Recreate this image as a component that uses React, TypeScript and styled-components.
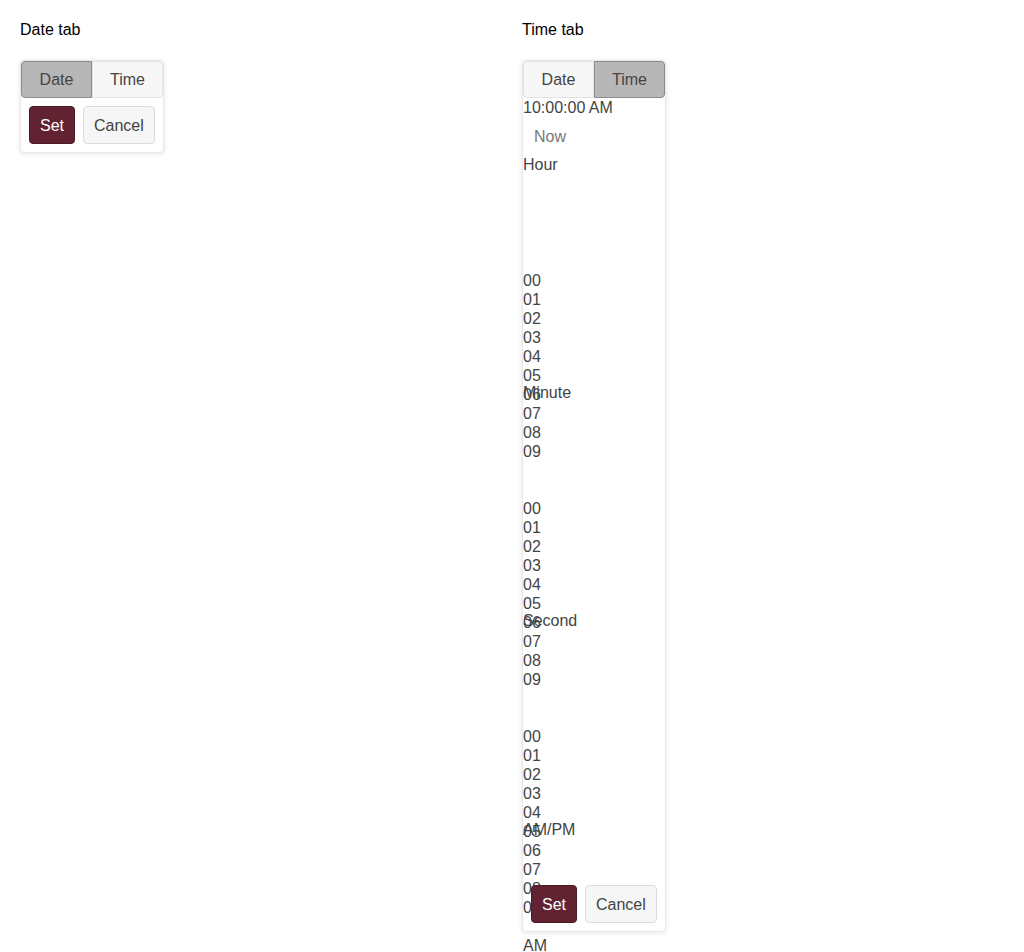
import React from 'react'
import styled, { createGlobalStyle } from 'styled-components'

const GlobalStyle = createGlobalStyle`
  body {
    margin: 0;
    background: #fff;
    font-family: "Liberation Sans", Arial, sans-serif;
    font-size: 16px;
    color: #444;
  }
`

const Page = styled.div`
  display: grid;
  grid-template-columns: 1fr 1fr;
  column-gap: 20px;
  padding: 20px;
  align-items: start;
`

const Column = styled.div`
  display: flex;
  flex-direction: column;
  align-items: flex-start;
`

const Caption = styled.div`
  color: #000;
  line-height: 20px;
  height: 20px;
  margin-bottom: 20px;
`

const Card = styled.div`
  display: flex;
  flex-direction: column;
  width: 144px;
  box-sizing: border-box;
  border: 1px solid #e8e8e8;
  border-radius: 4px;
  box-shadow: 0 1px 5px rgba(0, 0, 0, 0.1);
  background: #fff;
`

const Tabs = styled.div`
  display: grid;
  grid-template-columns: 71px 71px;
`

const Tab = styled.button<{ $active?: boolean }>`
  font: inherit;
  line-height: 18px;
  height: 37px;
  padding: 0;
  color: #444;
  cursor: pointer;
  background: ${p => (p.$active ? '#b7b7b7' : '#f7f7f7')};
  border: 1px solid ${p => (p.$active ? '#8c8c8c' : '#e2e2e2')};
  &:first-child {
    border-radius: 4px 0 0 4px;
  }
  &:last-child {
    border-radius: 0 4px 4px 0;
  }
`

const TimeText = styled.div`
  line-height: 19px;
  white-space: nowrap;
`

const LinkButton = styled.button`
  align-self: flex-start;
  font: inherit;
  line-height: 19px;
  padding: 9px 10px 8px;
  border: 1px solid transparent;
  background: transparent;
  color: #777;
  cursor: pointer;
`

const WheelLabel = styled.div`
  line-height: 19px;
  height: 19px;
  white-space: nowrap;
`

const Wheel = styled.div<{ $h: number }>`
  height: ${p => p.$h}px;
  flex-shrink: 0;
  overflow: visible;
`

const WheelList = styled.div`
  padding-top: 97px;
`

const WheelItem = styled.div`
  line-height: 19px;
  height: 19px;
`

const Actions = styled.div`
  display: flex;
  gap: 8px;
  padding: 8px;
`

const ActionButton = styled.button<{ $primary?: boolean }>`
  display: inline-block;
  font: inherit;
  line-height: 19px;
  padding: 9px 10px 8px;
  border-radius: 4px;
  cursor: pointer;
  color: ${p => (p.$primary ? '#fff' : '#444')};
  background: ${p => (p.$primary ? '#612331' : '#f6f6f6')};
  border: 1px solid ${p => (p.$primary ? '#4a1a25' : '#dcdcdc')};
`

const digits = Array.from({ length: 10 }, (_, i) => `0${i}`)

const wheels = [
  { label: 'Hour', h: 209, items: digits },
  { label: 'Minute', h: 209, items: digits },
  { label: 'Second', h: 190, items: digits },
  { label: 'AM/PM', h: 38, items: ['AM', 'PM'] },
]

const Footer: React.FC = () => (
  <Actions>
    <ActionButton $primary>Set</ActionButton>
    <ActionButton>Cancel</ActionButton>
  </Actions>
)

const App: React.FC = () => {
  return (
    <>
      <GlobalStyle />
      <Page>
        <Column>
          <Caption>Date tab</Caption>
          <Card>
            <Tabs>
              <Tab $active>Date</Tab>
              <Tab>Time</Tab>
            </Tabs>
            <Footer />
          </Card>
        </Column>
        <Column>
          <Caption>Time tab</Caption>
          <Card>
            <Tabs>
              <Tab>Date</Tab>
              <Tab $active>Time</Tab>
            </Tabs>
            <TimeText>10:00:00 AM</TimeText>
            <LinkButton>Now</LinkButton>
            {wheels.map(w => (
              <React.Fragment key={w.label}>
                <WheelLabel>{w.label}</WheelLabel>
                <Wheel $h={w.h}>
                  <WheelList>
                    {w.items.map(it => (
                      <WheelItem key={it}>{it}</WheelItem>
                    ))}
                  </WheelList>
                </Wheel>
              </React.Fragment>
            ))}
            <Footer />
          </Card>
        </Column>
      </Page>
    </>
  )
}

export default App
